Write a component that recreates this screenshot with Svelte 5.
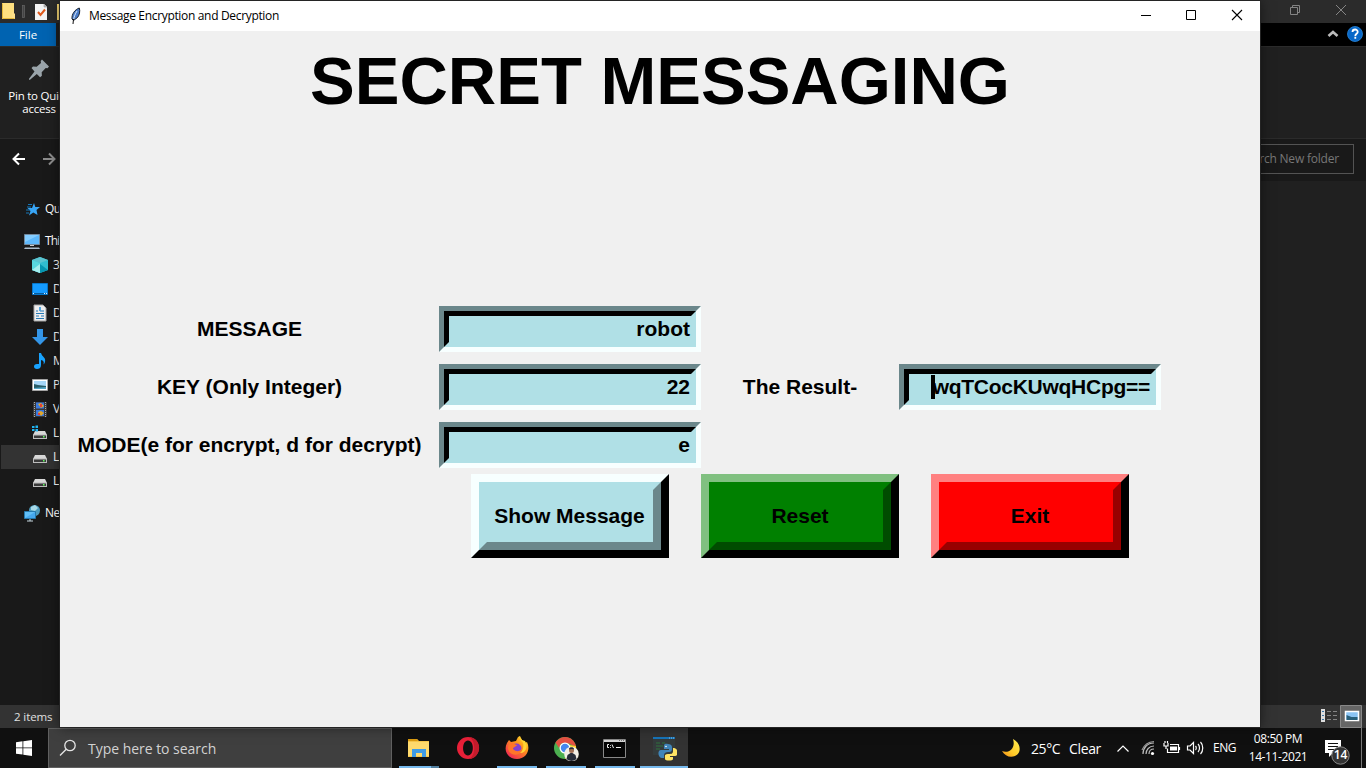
<script>
  const tree = [
    { label: 'Qu', icon: 'star', root: true },
    { label: 'Thi', icon: 'pc', root: true },
    { label: '3', icon: 'cube' },
    { label: 'D', icon: 'desktop' },
    { label: 'D', icon: 'doc' },
    { label: 'D', icon: 'down' },
    { label: 'M', icon: 'music' },
    { label: 'P', icon: 'picture' },
    { label: 'V', icon: 'video' },
    { label: 'L', icon: 'windrive' },
    { label: 'L', icon: 'drive', selected: true },
    { label: 'L', icon: 'drive' },
    { label: 'Ne', icon: 'network', root: true }
  ];
  const rows = [
    { label: 'MESSAGE', value: 'robot' },
    { label: 'KEY (Only Integer)', value: '22', result: 'wqTCocKUwqHCpg==' },
    { label: 'MODE(e for encrypt, d for decrypt)', value: 'e' }
  ];
  const buttons = [
    { label: 'Show Message', kind: 'show' },
    { label: 'Reset', kind: 'reset' },
    { label: 'Exit', kind: 'exit' }
  ];
  const apps = ['files', 'opera', 'firefox', 'chrome', 'cmd', 'python'];
</script>

{#snippet driveBody()}
  <path d="M4 7h10l2 4H2z" fill="#d8d8d8" /><path d="M2 10.500h14V15H2z" fill="#bdbdbd" /><path d="M3 11.500h12V14H3z" fill="#3a3a3a" /><path d="M12 12h1.500v1.500H12z" fill="#5dff5d" />
{/snippet}

<div class="screen">
  <div class="explorer">
    <div class="ex-title">
      <svg class="quick" width="60" height="23" viewBox="0 0 60 23">
        <path d="M2 3h12v10l1 1v5H2z" fill="#ffe08a" /><path d="M2 3h12v9H12v7H2z" fill="#fddf80" /><path d="M2.500 3.500v15h12" fill="none" stroke="#e5b93c" />
        <rect x="22.500" y="5.500" width="2" height="12" fill="#444" stroke="#666" stroke-width=".7" />
        <path d="M35 4h9l3 3v13H35z" fill="#f4f4f4" /><path d="M44 4v3h3" fill="#bbb" stroke="#999" stroke-width=".6" /><path d="M38 12l2.500 3 4.500-5.500" fill="none" stroke="#e05a1c" stroke-width="2" />
        <path d="M57 4h3v16h-3z" fill="#f7d774" />
      </svg>
      <div class="strip"></div>
      <svg class="ex-controls" width="86" height="23" viewBox="0 0 86 23" fill="none" stroke="#858585">
        <path d="M10.500 7.500h7v7h-7zM12.500 7V5.500h7v7H18M56 5l10 10M66 5L56 15" />
      </svg>
    </div>
    <div class="ex-tabs">
      <span class="file">File</span>
      <svg width="46" height="23" viewBox="0 0 46 23">
        <path d="M8.500 13l4.500-4 4.500 4" fill="none" stroke="#bcbcbc" stroke-width="2.600" />
        <circle cx="35" cy="11" r="7.500" fill="#0868c8" stroke="#2b86d9" stroke-width=".8" />
        <path d="M32.500 9c0-3.300 5.200-3.300 5.200-.1 0 2-2.400 1.700-2.400 4M35.300 13.800v2" fill="none" stroke="#fff" stroke-width="1.800" />
      </svg>
    </div>
    <div class="ribbon">
      <svg width="22" height="22" viewBox="0 0 22 22"><path d="M14 .5l7 7-1.500 1.800-1.800-.3-4 4.200.2 3.600-1.800 1.500-3.300-3.300L2 20.800 1 20.800 1 19.800 6.500 12.500l-3-3.500L5 7.500l3.700.2L13 4l-.3-2z" fill="#9aa4aa" /></svg>
      <div class="pin">Pin to Quick<br />access</div>
    </div>
    <div class="nav">
      <svg width="60" height="42" viewBox="0 0 60 42" fill="none" stroke-width="2">
        <path d="M25 20H13.500M19 14.500L13.500 20l5.500 5.500" stroke="#fff" />
        <path d="M43 20h11.500M49 14.500l5.500 5.500-5.500 5.500" stroke="#8c8c8c" />
      </svg>
      <div class="ex-search"><span>Search New folder</span></div>
    </div>
    <div class="ex-main">
      <div class="tree">
        {#each tree as item}
          <div class="node {item.icon}" class:root={item.root} class:selected={item.selected}>
            <svg width="18" height="18" viewBox="0 0 18 18">
              {#if item.icon === 'star'}
                <path d="M11 3l1.300 4H17l-3.500 3 1 5-4.200-2.500L6 15.500 7.500 11 4.500 8h4.500z" fill="#38a5f5" /><path d="M5 4.500h4M4 7h4M3 10h4M3 13h3" stroke="#1578ba" />
              {:else if item.icon === 'pc'}
                <path d="M1.500 2.500h15v10h-15z" fill="#5db8fb" stroke="#72889c" /><path d="M2 3h14L2 10z" fill="#84cdff" /><path d="M7 13h4v1H7z" fill="#ccc" /><path d="M2 15.500h14l1 1.500H1z" fill="#abbdcc" />
              {:else if item.icon === 'cube'}
                <path d="M9 1l8 3v10l-8 3-8-3V4z" fill="#31bed0" /><path d="M9 1l8 3-8 3-8-3z" fill="#5cc4d0" /><path d="M1 4l8 3v10l-8-3z" fill="#59d8df" /><path d="M9 8L1 14l8 3z" fill="#a4efee" /><path d="M9 8l8 6-8 3z" fill="#0797b1" />
              {:else if item.icon === 'desktop'}
                <path d="M1.500 3.500h15v11h-15z" fill="#159bff" stroke="#0877c9" /><path d="M2 13.500h14" stroke="#075b9b" /><path d="M2 13.500h1M13 13.500h1m1 0h1" stroke="#dff3ff" />
              {:else if item.icon === 'doc'}
                <path d="M3 1h9l3 3v13H3z" fill="#eee" stroke="#a5a5a5" /><path d="M5 7h2m2 0h4M5 9.500h8M5 12h3m2 0h3M5 14.500h8" stroke="#2679b5" stroke-width="1" /><path d="M8 3h2v4H8z" fill="#55a7df" />
              {:else if item.icon === 'down'}
                <path d="M6 1h6v8h5l-8 8-8-8h5z" fill="#3496e8" />
              {:else if item.icon === 'music'}
                <path d="M8 1h2c1 4 5 4 4 9-.3 1-.8 2-1.500 2.500.8-2.500 0-4-2.500-4.500v5c0 3-2 4-4 4-4 0-4-5 0-5h2z" fill="#18a3ff" />
              {:else if item.icon === 'picture'}
                <path d="M1.500 3.500h15v11h-15z" fill="#fff" stroke="#a5a5a5" /><path d="M3 5h12v8H3z" fill="#a5d6f7" /><path d="M3 8l4 1 8 1v3H3z" fill="#285d68" /><path d="M3 12l12-1v2H3z" fill="#55a6c5" />
              {:else if item.icon === 'video'}
                <path d="M2 2h14v15H2z" fill="#393939" /><path d="M3.500 2v15M14.500 2v15" stroke="#aaa" stroke-dasharray="1 1" /><path d="M5 2.500h8v6H5zM5 10h8v6H5z" fill="#3b79dc" /><path d="M7 4l3-1 3 3-3 2zM7 12l3-1 3 2-3 3z" fill="#e3a829" /><path d="M9 4h2v3H9zM7 13h2v2H7z" fill="#e43e37" />
              {:else if item.icon === 'windrive'}
                {@render driveBody()}<path d="M1 2h2.500v2H1zM4.500 1.500H7V4H4.500zM1 5h2.500v2H1zM4.500 5H7v2.500H4.500z" fill="#20b5f2" />
              {:else if item.icon === 'drive'}
                {@render driveBody()}
              {:else}
                <circle cx="11.500" cy="6.500" r="5.500" fill="#4e9cbe" /><path d="M8 3l4-2 3 3-3 3-4-1z" fill="#a8dae8" /><path d="M1.500 7.500h11v7h-11z" fill="#61bff7" stroke="#2479ad" /><path d="M2 14l10-6v6z" fill="#45a8ef" /><path d="M4 17h6M7 15v2" stroke="#c5d6df" />
              {/if}
            </svg>
            <span>{item.label}</span>
          </div>
        {/each}
      </div>
    </div>
    <div class="status">
      <span>2 items</span>
      <svg width="46" height="23" viewBox="0 0 46 23">
        <path d="M1 4h4v13H1z" fill="#ddd" /><path d="M2 6.500h2M2 10.500h2M2 14.500h2" stroke="#3a77a8" />
        <path d="M7 6.500h4m2 0h4M7 10.500h4m2 0h4M7 14.500h4m2 0h4" stroke="#858585" />
        <path d="M20.500.5h21v22h-21z" fill="#666" stroke="#888" /><path d="M25.500 6.500h13v9h-13z" fill="#8bc4f4" stroke="#fff" stroke-width="1.500" /><path d="M26.500 10l5 2h6v3h-11z" fill="#285f7a" />
      </svg>
    </div>
  </div>

  <section class="window">
    <header>
      <svg width="12" height="18" viewBox="0 0 12 18"><path d="M9.300 1C5 2.500 1.500 7 2 12l1.500 1.500L7.500 10.500C9.500 8 10.300 4 9.300 1z" fill="#4a7cc8" stroke="#18202c" /><path d="M7 4C5 7 4 10 3.500 13" fill="none" stroke="#dde9f5" /><path d="M3.500 12L3 17" stroke="#111" /></svg>
      <h2>Message Encryption and Decryption</h2>
      <svg class="controls" width="138" height="30" viewBox="0 0 138 30" fill="none" stroke="#000"><path d="M19 14.500h10M64.500 9.500h9v9h-9z" /><path d="M110 9l10 10M120 9l-10 10" stroke-width="1.100" /></svg>
    </header>
    <h1>SECRET MESSAGING</h1>
    <div class="form">
      {#each rows as row}
        <div class="row">
          <label><span>{row.label}</span></label>
          <div class="field"><div>{row.value}</div></div>
          {#if row.result}
            <label><span>The Result-</span></label>
            <div class="field result"><div><i class="caret"></i>{row.result}</div></div>
          {/if}
        </div>
      {/each}
      <div class="buttons">
        {#each buttons as b}
          <button class={b.kind}><span>{b.label}</span></button>
        {/each}
      </div>
    </div>
  </section>

  <footer class="taskbar">
    <div class="start"><svg width="16" height="16" viewBox="0 0 16 16"><path d="M0 2.200l6.500-.9v6.200H0zM7.300 1.200L16 0v7.500H7.300zM0 8.300h6.500v6.300L0 13.700zM7.300 8.300H16V16l-8.700-1.200z" fill="#fff" /></svg></div>
    <div class="search">
      <svg width="18" height="18" viewBox="0 0 18 18" fill="none" stroke="#e5e5e5" stroke-width="1.300"><circle cx="11" cy="6.500" r="5.200" /><path d="M7.200 10.300L1 16.500" /></svg>
      <span>Type here to search</span>
    </div>
    <div class="apps">
      {#each apps as app}
        <div class="app {app}">
          <svg width="26" height="26" viewBox="0 0 26 26">
            {#if app === 'files'}
              <path d="M2 4h9l2 2h10v16H2z" fill="#f7c64a" /><path d="M2 4h9l1 2H2z" fill="#dc9c11" /><path d="M2 7h21v14H2z" fill="#ffda6d" /><path d="M6 14h14v8h-4v-4h-6v4H6z" fill="#3f9be5" />
            {:else if app === 'opera'}
              <path fill-rule="evenodd" d="M13 2a11 11 0 1 0 0 22 11 11 0 1 0 0-22zm0 3.500c6.500 0 6.500 15 0 15s-6.500-15 0-15z" fill="#e82038" /><path d="M14 2c14 1 13 21 0 22 7-3 7-19 0-22z" fill="#c31c2c" />
            {:else if app === 'firefox'}
              <defs><linearGradient id="ff" x1="1" y1="0" x2=".2" y2="1"><stop offset="0" stop-color="#fff03c" /><stop offset=".4" stop-color="#ff9a18" /><stop offset="1" stop-color="#f02255" /></linearGradient></defs>
              <path d="M3 8l2-3 2 2 5-1 2-4 2-1 2 4 3 3 2-1c4 8-1 17-10 17C4 24-1 16 3 8z" fill="url(#ff)" /><circle cx="12.500" cy="13.500" r="5" fill="#8341cf" /><path d="M5 8c4-1 5 2 8 2-1 2-4 2-4 4 4 4 9 2 9-2 2 9-13 11-14 1z" fill="#ff7529" /><path d="M15 1c0 4 3 4 4 7s0 8-3 10c7 0 8-8 5-12l-3-1-3-4z" fill="#ffd434" />
            {:else if app === 'chrome'}
              <circle cx="12" cy="13" r="11" fill="#4caf50" /><path d="M2.500 7.500A11 11 0 0 1 23 12l-7-3.500H8L6 13z" fill="#e65143" /><path d="M23 11a11 11 0 0 1-11 13l5-9-1-5z" fill="#ffd02e" /><circle cx="12" cy="13" r="5.500" fill="#fff" /><circle cx="12" cy="13" r="4.200" fill="#4688ef" /><circle cx="18.500" cy="19" r="7.300" fill="#f2eee5" /><circle cx="18.500" cy="15.500" r="2.500" fill="#a26f54" /><path d="M16 14.500c-.5-3 5.500-3 5 0l-2-.5zM13.500 24l1-4 3-2h2l3 2 1 4c-3 2.500-7 2.500-10 0z" fill="#252b38" />
            {:else if app === 'cmd'}
              <path d="M2.500 4.500h22v18h-22z" fill="#050505" stroke="#888" /><path d="M3 5h21v2H3z" fill="#d5d5d5" /><path d="M18 5.500h5" stroke="#777" stroke-dasharray="1 1" /><path d="M8 9.500H6.500v3H8M9.500 10v.8m0 1.200v.8M11 9.500l1.500 3.500M15 12.500h5" fill="none" stroke="#eee" />
            {:else}
              <path d="M2 2h22v18H2z" fill="#343b3c" /><path d="M2 2h22v2H2z" fill="#1774b8" /><path d="M18 3h5" stroke="#8dc6ee" stroke-dasharray="1 1" /><path d="M5 8h4m2 0h3M5 11h7M5 14h4" stroke="#31603d" stroke-width="1.500" />
              <path d="M18 9c-5-1-4 2-4 5h5v1h-8c-4 0-3 8 1 8h2v-3c0-2 2-3 4-3 4 0 4-1 4-5 0-2-2-3-4-3z" fill="#4084b8" transform="translate(-1)" /><path d="M22 13v3c0 3-2 3-5 3-4 0-3 2-3 5 0 2 8 2 8 0v-2h-3v-1h5c4 0 3-8-1-8z" fill="#ffe464" /><circle cx="15" cy="11.500" r=".8" fill="#fff" />
            {/if}
          </svg>
        </div>
      {/each}
    </div>
    <div class="weather">
      <svg width="20" height="20" viewBox="0 0 20 20"><defs><linearGradient id="moon" x1="1" y1="0" x2="0" y2="1"><stop offset="0" stop-color="#fff056" /><stop offset=".6" stop-color="#ffc928" /><stop offset="1" stop-color="#ef8b18" /></linearGradient></defs><path d="M12 1c8 4 9 14 2 17-5 2-10 0-13-5 7 3 14-3 11-12z" fill="url(#moon)" /></svg>
      <span class="temp">25°C</span><span class="clear">Clear</span>
    </div>
    <svg class="tray" width="92" height="40" viewBox="0 0 92 40" fill="none" stroke="#fff" stroke-width="1.200">
      <path d="M5.500 23.500l5.500-5.500 5.500 5.500" />
      <path d="M31 26c0-6 4-11 11-11M34 26c0-4 3-8 8-8M37 26c0-3 2-5 5-5" stroke="#bbb" /><path d="M30 22c2-5 6-8 12-8.500" stroke="#999" /><circle cx="40.500" cy="25.500" r="1.600" fill="#fff" stroke="none" />
      <path d="M58 16.500h8.500v8H55.500v-4" /><path d="M58 18.500h7v4h-7z" fill="#fff" stroke="none" /><path d="M67.500 19v3M52 15v3h4v-3M53 13V15m2.500-2V15M54 18v3" />
      <path d="M75.500 18h2.500l3.500-3.500v11L78 22h-2.500zM83.500 18c1 1 1 3 0 4M86 16c2 2 2 6 0 8M88.500 14c3 3 3 9 0 12" />
    </svg>
    <span class="lang">ENG</span>
    <div class="clock"><span>08:50 PM</span><span class="date">14-11-2021</span></div>
    <div class="notes">
      <svg width="28" height="28" viewBox="0 0 28 28"><path d="M1 1h16v13H9l-4 4v-4H1z" fill="#fff" /><path d="M4 4.500h10M4 7.500h10M4 10.500h6" stroke="#111" stroke-width="1.200" /><circle cx="16.500" cy="16.500" r="8.700" fill="#333" stroke="#888" /></svg>
      <b>14</b>
    </div>
    <div class="peek"></div>
  </footer>
</div>

<style>
  :global(body) { margin: 0; background: #101010; overflow: hidden; }
  .screen { width: 1366px; height: 768px; position: relative; overflow: hidden; display: flex; flex-direction: column; font-family: "Open Sans", "Noto Sans", sans-serif; font-size: 12px; color: #fff; }
  svg { display: block; flex: none; }
  .screen * { box-sizing: border-box; }
  .explorer { height: 728px; display: flex; flex-direction: column; background: #191919; }
  .ex-title { height: 23px; background: #2b2b2b; display: flex; }
  .strip { margin-left: 169px; width: 90px; height: 1px; background: #705663; }
  .ex-controls { margin-left: auto; }
  .ex-tabs { height: 23px; background: #000; display: flex; justify-content: space-between; }
  .file { width: 56px; background: #0063b1; text-align: center; line-height: 24px; font-size: 11.500px; box-shadow: 4px 0 #1f1f1f; }
  .ribbon { height: 93px; background: #202020; border-top: 1px solid #2b2b2b; border-bottom: 1px solid #2b2b2b; padding: 12px 0 0 28px; }
  .pin { margin: 8px 0 0 -21px; width: 64px; line-height: 13px; font-size: 11.500px; text-align: center; white-space: nowrap; letter-spacing: -.25px; }
  .nav { height: 42px; display: flex; justify-content: space-between; padding-right: 12px; }
  .ex-search { margin-top: 5px; width: 150px; height: 30px; border: 1px solid #535353; color: #777; display: flex; justify-content: flex-end; align-items: center; padding: 0 14px 1px 0; font-size: 12px; letter-spacing: -.2px; }
  .ex-main { height: 524px; background: linear-gradient(90deg, #191919 60px, #202020 60px); padding-top: 16px; }
  .tree { width: 60px; overflow: hidden; display: flex; flex-direction: column; }
  .node { height: 24px; flex: none; display: flex; align-items: center; gap: 4px; padding-left: 31px; font-size: 12px; letter-spacing: -.5px; white-space: nowrap; }
  .node span { margin-top: -1px; }
  .node.root { padding-left: 23px; }
  .node.pc { letter-spacing: -.8px; }
  .node.star { margin-bottom: 8px; }
  .node.network { margin-top: 8px; }
  .node.selected { background: linear-gradient(90deg, #191919 1px, #333 1px); }
  .status { height: 23px; background: #333; display: flex; align-items: center; justify-content: space-between; padding: 0 0 0 14px; font-size: 11.500px; letter-spacing: -.1px; color: #e0e0e0; }

  .window { position: absolute; left: 60px; top: 1px; width: 1200px; height: 726px; background: #f0f0f0; color: #000; box-shadow: 0 0 0 1px #242424, 0 0 12px #0008; }
  header { height: 30px; background: #fff; display: flex; align-items: center; padding-left: 10px; }
  h2 { margin: -1px 0 0 7px; font-weight: 400; font-size: 12px; letter-spacing: -.33px; white-space: nowrap; }
  .controls { margin-left: auto; }
  h1 { margin: 0; height: 275px; padding-top: 10px; text-align: center; font: bold 67px/80px "Liberation Sans", Arial, sans-serif; white-space: nowrap; }
  .form { font: bold 21px/24px "Liberation Sans", Arial, sans-serif; display: flex; flex-direction: column; }
  .row { display: grid; grid-template-columns: 379px 262px 198px 262px; height: 58px; }
  label { text-align: center; padding-top: 11px; white-space: nowrap; }
  .field { height: 46px; border: 5px solid; border-color: #6b878b #f7ffff #f7ffff #6b878b; background: #b0e0e6; }
  .field div { height: 36px; border: 5px solid; border-color: #000 #b0e0e6 #b0e0e6 #000; display: flex; justify-content: flex-end; align-items: center; padding: 0 1px 0 0; white-space: nowrap; }
  .result { letter-spacing: -.27px; }
  .caret { width: 4px; height: 24px; background: #000; margin-right: -2px; }
  .buttons { display: flex; gap: 32px; margin: -6px 0 0 411px; }
  button { width: 198px; height: 84px; padding: 0; border: 8px solid; font: inherit; color: #000; }
  button span { display: flex; align-items: center; justify-content: center; width: 182px; height: 68px; border: 8px solid; }
  .show { background: #b0e0e6; border-color: #f7ffff #000 #000 #f7ffff; }
  .show span { border-color: #b0e0e6 #6b878b #6b878b #b0e0e6; padding-right: 1px; }
  .reset { background: #008000; border-color: #80c080 #000 #000 #80c080; }
  .reset span { border-color: #008000 #004c00 #004c00 #008000; }
  .exit { background: #f00; border-color: #ff8080 #000 #000 #ff8080; }
  .exit span { border-color: #f00 #990000 #990000 #f00; }

  .taskbar { height: 40px; background: #101010; display: flex; align-items: stretch; }
  .start { width: 48px; display: grid; place-items: center; }
  .search { width: 344px; background: #3f3f3f; border: 1px solid #606060; display: flex; align-items: center; padding-left: 10px; color: #d2d2d2; font-size: 14px; }
  .search span { margin-left: 11px; letter-spacing: -.03px; }
  .apps { display: flex; margin-left: 2px; width: 294px; }
  .app { width: 49px; display: grid; place-items: center; flex: none; border-bottom: 2px solid transparent; }
  .app:not(.opera) { background: linear-gradient(#76b9ed, #76b9ed) 50% 100% / 40px 2px no-repeat; background-origin: border-box; background-clip: border-box; }
  .app.files { background: linear-gradient(90deg, #76b9ed 32px, #527f9f 32px) 50% 100% / 40px 2px no-repeat; background-origin: border-box; background-clip: border-box; }
  .app svg { margin-top: 1px; }
  .app.files svg, .app.chrome svg { margin-left: 1px; }
  .app.cmd svg { margin-left: -2px; }
  .app.python { width: 48px; margin-left: 1px; background: #333; border-bottom-color: #76b9ed; background-clip: padding-box; }
  .weather { margin-left: 313px; width: 111px; display: flex; align-items: center; font-size: 14px; }
  .temp { margin-left: 10px; width: 38px; letter-spacing: -.4px; }
  .clear { letter-spacing: -.35px; }
  .lang { margin-left: 9px; width: 34px; line-height: 40px; font-size: 12px; letter-spacing: -.45px; }
  .clock { width: 62px; display: flex; flex-direction: column; align-items: center; padding-top: 2px; line-height: 18px; font-size: 12px; letter-spacing: -.4px; white-space: nowrap; }
  .notes { width: 30px; margin-left: 15px; padding-top: 11px; position: relative; }
  .notes b { position: absolute; left: 8px; top: 18px; width: 17px; text-align: center; font-size: 12px; line-height: 18px; font-weight: 600; }
  .peek { width: 5px; margin-left: auto; border-left: 1px solid #777; }
</style>
